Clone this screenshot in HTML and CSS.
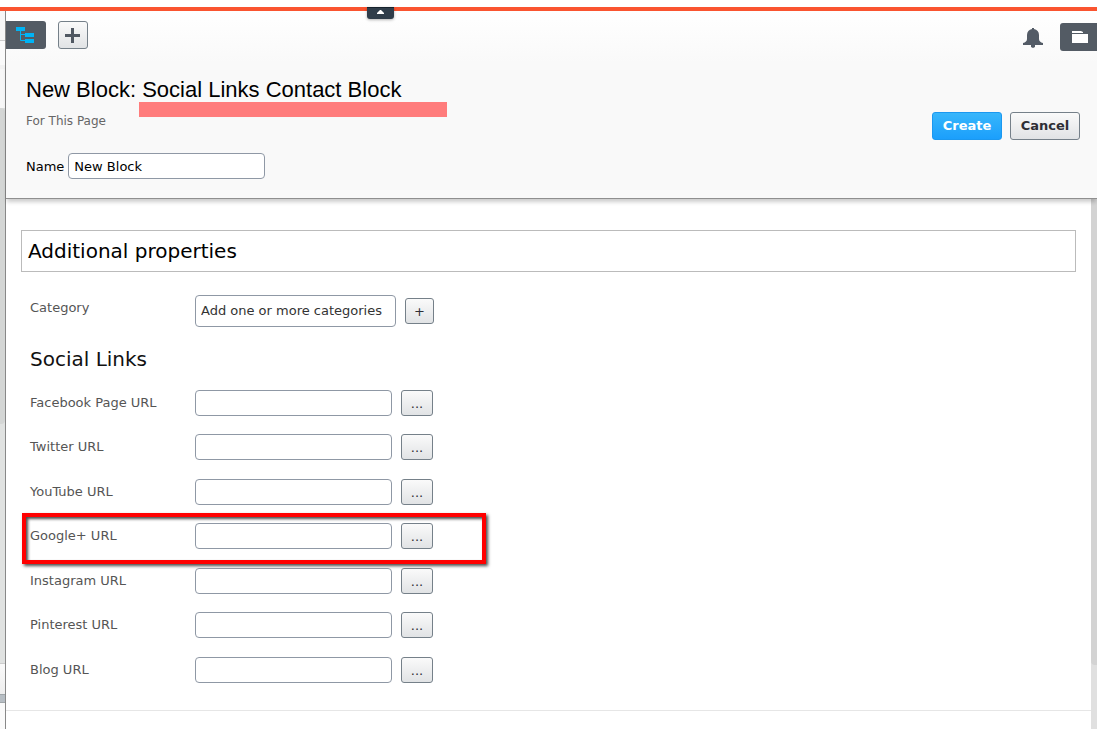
FILE: index.html
```html
<!DOCTYPE html>
<html lang="en">
<head>
    <meta charset="UTF-8">
    <meta name="viewport" content="width=device-width, initial-scale=1.0">
    <title>New Block</title>
    <link rel="stylesheet" href="styles.css">
</head>
<body>
    <div class="top-bar">
        <button type="button" class="top-toggle" aria-label="Toggle menu">
            <svg width="7" height="4" viewBox="0 0 7 4"><path d="M0 4V3L3 0h1l3 3v1z" fill="#fff"/></svg>
        </button>
    </div>
    <div class="workspace">
        <div class="rail">
            <div class="rail-top"></div>
            <div class="rail-tabs"></div>
            <div class="rail-scroll"><div class="rail-thumb"></div></div>
            <div class="rail-footer"></div>
            <div class="rail-splitter"></div>
            <div class="rail-bottom"></div>
        </div>
        <main class="panel">
            <div class="toolbar">
                <button type="button" class="pane-button tree" aria-label="Navigation pane">
                    <svg width="18" height="17" viewBox="0 0 18 17">
                        <path d="M0 0h9v4H0zM9 6h9v4H9zM9 12h9v4H9z" fill="#00b4f5"/>
                        <path d="M4.500 4v9.500H9M4.500 7.500H9" fill="none" stroke="#00b4f5"/>
                    </svg>
                </button>
                <button type="button" class="add-button" aria-label="Add">
                    <svg width="15" height="15" viewBox="0 0 15 15"><path d="M6 0h3v6h6v3H9v6H6V9H0V6h6z" fill="#505862"/></svg>
                </button>
                <span class="spacer"></span>
                <button type="button" class="bell-button" aria-label="Notifications">
                    <svg width="20" height="20" viewBox="0 0 20 20"><path d="M9 0h2v1c3 .7 5 2.800 5 6v4c0 2 1.500 3.500 4 4v2h-8v2l-2 1-2-1v-2H0v-2c2.500-.5 4-2 4-4V7c0-3.200 2-5.300 5-6z" fill="#535b66"/></svg>
                </button>
                <button type="button" class="pane-button assets" aria-label="Assets pane">
                    <svg width="16" height="12" viewBox="0 0 16 12"><path d="M0 0h9l2 1v1H0zM0 3h16v9H0z" fill="#fff"/></svg>
                </button>
            </div>
            <header class="block-header">
                <div class="block-info">
                    <h1>New Block: <span class="block-type">Social Links Contact Block</span></h1>
                    <p class="location">For This Page</p>
                    <div class="name-row">
                        <label for="name">Name</label>
                        <input type="text" id="name" name="name" value="New Block">
                    </div>
                </div>
                <div class="actions">
                    <button type="submit" form="block-form" class="button primary">Create</button>
                    <button type="button" class="button">Cancel</button>
                </div>
            </header>
            <div class="content">
                <form id="block-form">
                    <h2 class="section-title">Additional properties</h2>
                    <div class="group">
                        <div class="field category">
                            <label for="category">Category</label>
                            <input type="text" id="category" name="category" placeholder="Add one or more categories">
                            <button type="button" class="button small" aria-label="Add category">+</button>
                        </div>
                        <h3>Social Links</h3>
                        <div class="links">
                            <div class="field">
                                <label for="facebook">Facebook Page URL</label>
                                <input type="text" id="facebook" name="facebook">
                                <button type="button" class="button small">...</button>
                            </div>
                            <div class="field">
                                <label for="twitter">Twitter URL</label>
                                <input type="text" id="twitter" name="twitter">
                                <button type="button" class="button small">...</button>
                            </div>
                            <div class="field">
                                <label for="youtube">YouTube URL</label>
                                <input type="text" id="youtube" name="youtube">
                                <button type="button" class="button small">...</button>
                            </div>
                            <div class="field highlighted">
                                <label for="google">Google+ URL</label>
                                <input type="text" id="google" name="google">
                                <button type="button" class="button small">...</button>
                            </div>
                            <div class="field">
                                <label for="instagram">Instagram URL</label>
                                <input type="text" id="instagram" name="instagram">
                                <button type="button" class="button small">...</button>
                            </div>
                            <div class="field">
                                <label for="pinterest">Pinterest URL</label>
                                <input type="text" id="pinterest" name="pinterest">
                                <button type="button" class="button small">...</button>
                            </div>
                            <div class="field">
                                <label for="blog">Blog URL</label>
                                <input type="text" id="blog" name="blog">
                                <button type="button" class="button small">...</button>
                            </div>
                        </div>
                    </div>
                </form>
                <div class="scrollbar"><div class="scroll-thumb"></div></div>
            </div>
        </main>
    </div>
</body>
</html>
```
FILE: styles.css
```css
*, *::before, *::after {
    box-sizing: border-box;
}
body {
    margin: 0;
    min-height: 100vh;
    display: flex;
    flex-direction: column;
    background: #fff;
    color: #000;
    font: 13px/18px Verdana, "DejaVu Sans", sans-serif;
}
h1, h2, h3, p {
    margin: 0;
    font-weight: normal;
}
button, input {
    margin: 0;
    font: inherit;
}
button {
    cursor: pointer;
}
svg {
    display: block;
}

/* top bar */
.top-bar {
    position: relative;
    height: 11px;
    border-bottom: 4px solid #fa5430;
}
.top-toggle {
    position: absolute;
    z-index: 1;
    top: 7px;
    left: 367px;
    width: 27px;
    height: 12px;
    padding: 2px 10px 5px;
    border: 0;
    border-top: 1px solid #17222c;
    border-radius: 0 0 3px 3px;
    background: #2f3d4a;
    box-shadow: 0 1px 3px rgba(0,0,0,0.3);
}

.workspace {
    flex: 1;
    display: flex;
}

/* sliver of the pane on the left */
.rail {
    width: 6px;
    display: flex;
    flex-direction: column;
    border-right: 1px solid #888;
}
.rail-top {
    height: 30px;
    background: #f7f7f7;
    border-bottom: 1px solid #ccc;
}
.rail-tabs {
    height: 67px;
    background: linear-gradient(#fafafa 24px, #f2f2f2 24px, #f2f2f2 28px, #f7f7f7 28px);
}
.rail-scroll {
    flex: 1;
    background: #e0e2e1;
}
.rail-thumb {
    height: 57%;
    border-radius: 0 4px 4px 0;
    background: #d4d6d5;
}
.rail-footer {
    height: 31px;
    border-top: 1px solid #ccc;
    background: linear-gradient(#fafafa, #eee);
}
.rail-splitter {
    height: 9px;
    border: 1px solid #a0a6aa;
    border-width: 1px 0;
    background: #b7bec4;
}
.rail-bottom {
    height: 26px;
    background: #fafafa;
}

.panel {
    flex: 1;
    display: flex;
    flex-direction: column;
}

/* toolbar */
.toolbar {
    height: 52px;
    padding-top: 10px;
    display: flex;
    align-items: flex-start;
    background: linear-gradient(#fff, #f9f9f9);
}
.spacer {
    flex: 1;
}
.pane-button {
    height: 28px;
    border: 0;
    background: #535b64;
}
.tree {
    width: 40px;
    padding: 0 10px;
    border-radius: 0 3px 3px 0;
}
.assets {
    width: 37px;
    margin-top: 2px;
    padding: 0 12px;
    border-radius: 3px 0 0 3px;
}
.add-button {
    width: 30px;
    height: 28px;
    margin-left: 12px;
    padding: 0 6px;
    border: 1px solid #758089;
    border-radius: 3px;
    background: linear-gradient(#fafafa, #e1e3e5);
}
.bell-button {
    margin: 7px 17px 0 0;
    padding: 0;
    border: 0;
    background: none;
}

/* header */
.block-header {
    position: relative;
    display: flex;
    justify-content: space-between;
    align-items: flex-start;
    padding: 13px 17px 19px 20px;
    border-bottom: 1px solid #8f8f8f;
    background: #f9f9f9;
    box-shadow: 0 4px 4px -1px rgba(0,0,0,0.2);
}
h1 {
    font: 22px/28px Arial, "Liberation Sans", sans-serif;
}
.block-type {
    position: relative;
}
.block-type::after {
    content: "";
    position: absolute;
    top: 25px;
    left: -3px;
    width: 308px;
    height: 15px;
    background: #ff7c7c;
}
.location {
    margin: 8px 0 23px;
    color: #666;
    font-size: 12px;
}
.name-row {
    display: flex;
    align-items: center;
    gap: 4px;
}
.name-row label {
    padding-top: 2px;
}
input {
    width: 197px;
    height: 26px;
    padding: 0 5px;
    border: 1px solid #8f98a5;
    border-radius: 4px;
    background: #fff;
    color: #000;
}
input::placeholder {
    color: #333;
    opacity: 1;
}
.actions {
    display: flex;
    gap: 8px;
    margin-top: 36px;
}
.button {
    width: 70px;
    height: 28px;
    padding: 0;
    border: 1px solid #758089;
    border-radius: 3px;
    background: linear-gradient(#fafafa, #e1e3e5);
    color: #2e2e35;
    font-weight: bold;
}
.primary {
    border-color: #1b98f0;
    background: linear-gradient(#38b6fb, #1b9ffc);
    color: #fff;
}
.small {
    width: 32px;
    height: 26px;
    padding: 2px 0 0;
    font-weight: normal;
}

/* properties form */
.content {
    flex: 1;
    display: flex;
}
form {
    flex: 1;
    padding: 31px 15px 0;
}
.section-title {
    padding: 6px;
    border: 1px solid #bbb;
    font-size: 20px;
    line-height: 28px;
}
.group {
    margin: 0 -15px;
    padding: 23px 24px 9px;
    border-bottom: 1px solid #e6e6e6;
}
h3 {
    margin: 18px 0 17px;
    color: #111;
    font-size: 20px;
    line-height: 28px;
}
.field {
    position: relative;
    display: grid;
    grid-template-columns: 156px auto auto;
    column-gap: 9px;
    justify-content: start;
    align-items: center;
}
.field label {
    align-self: start;
    padding-top: 4px;
    color: #555;
}
.category input {
    width: 201px;
    height: 32px;
    padding-bottom: 2px;
}
.category .small {
    width: 29px;
}
.links .field {
    margin-bottom: 18px;
}
.links .field:nth-child(even) {
    margin-bottom: 19px;
}
.highlighted::after {
    content: "";
    position: absolute;
    top: -10px;
    left: -8px;
    width: 464px;
    height: 51px;
    border: 4px solid #f00;
    box-shadow: 2px 2px 3px rgba(0,0,0,0.7), inset 2px 2px 3px rgba(0,0,0,0.7);
    pointer-events: none;
}

.scrollbar {
    width: 6px;
    background: #e0e0e0;
}
.scroll-thumb {
    height: 88%;
    border-radius: 0 0 0 4px;
    background: #d3d3d3;
}
```
